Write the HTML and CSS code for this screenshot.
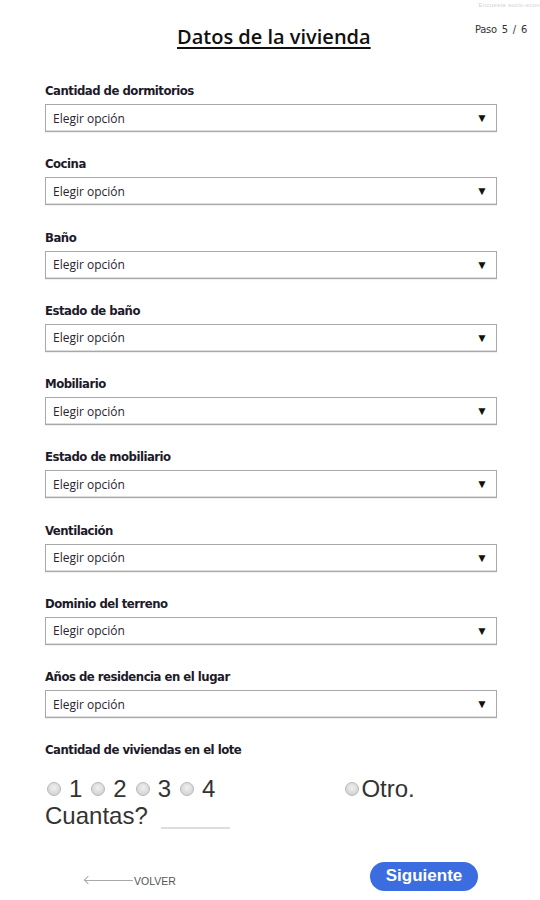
FILE: index.html
```html
<!DOCTYPE html>
<html lang="es">
<head>
<meta charset="utf-8">
<title>Datos de la vivienda</title>
<link rel="stylesheet" href="styles.css">
</head>
<body>
<div class="page">
  <div class="topnote">Encuesta socio-econ</div>
  <header class="header">
    <h1 class="title">Datos de la vivienda</h1>
    <div class="step">Paso 5 / 6</div>
  </header>

  <form class="form">
    <div class="field">
      <div class="label">Cantidad de dormitorios</div>
      <div class="select"><span class="placeholder">Elegir opción</span><span class="arrow">▼</span></div>
    </div>
    <div class="field">
      <div class="label">Cocina</div>
      <div class="select"><span class="placeholder">Elegir opción</span><span class="arrow">▼</span></div>
    </div>
    <div class="field">
      <div class="label">Baño</div>
      <div class="select"><span class="placeholder">Elegir opción</span><span class="arrow">▼</span></div>
    </div>
    <div class="field">
      <div class="label">Estado de baño</div>
      <div class="select"><span class="placeholder">Elegir opción</span><span class="arrow">▼</span></div>
    </div>
    <div class="field">
      <div class="label">Mobiliario</div>
      <div class="select"><span class="placeholder">Elegir opción</span><span class="arrow">▼</span></div>
    </div>
    <div class="field">
      <div class="label">Estado de mobiliario</div>
      <div class="select"><span class="placeholder">Elegir opción</span><span class="arrow">▼</span></div>
    </div>
    <div class="field">
      <div class="label">Ventilación</div>
      <div class="select"><span class="placeholder">Elegir opción</span><span class="arrow">▼</span></div>
    </div>
    <div class="field">
      <div class="label">Dominio del terreno</div>
      <div class="select"><span class="placeholder">Elegir opción</span><span class="arrow">▼</span></div>
    </div>
    <div class="field">
      <div class="label">Años de residencia en el lugar</div>
      <div class="select"><span class="placeholder">Elegir opción</span><span class="arrow">▼</span></div>
    </div>

    <div class="field last">
      <div class="label">Cantidad de viviendas en el lote</div>
      <div class="radios">
        <span class="opt"><span class="dot"></span>1</span>
        <span class="opt"><span class="dot"></span>2</span>
        <span class="opt"><span class="dot"></span>3</span>
        <span class="opt"><span class="dot"></span>4</span>
        <span class="opt other"><span class="dot"></span>Otro.</span>
      </div>
      <div class="howmany">Cuantas? <span class="line"></span></div>
    </div>
  </form>

  <footer class="footer">
    <a class="back"><span class="back-arrow"></span>VOLVER</a>
    <button class="next" type="button">Siguiente</button>
  </footer>
</div>
</body>
</html>
```
FILE: styles.css
```css
html, body {
  margin: 0;
  padding: 0;
  background: #fff;
}
body {
  font-family: "Liberation Sans", Arial, sans-serif;
  color: #222;
  overflow: hidden;
}
.page {
  width: 540px;
  height: 900px;
  position: relative;
}
.topnote {
  text-align: right;
  font-size: 6px;
  line-height: 8px;
  height: 8px;
  padding-top: 1px;
  color: #d2d2d2;
  white-space: nowrap;
  letter-spacing: 0.3px;
}
.header {
  display: flex;
  align-items: flex-start;
  padding-left: 177px;
  padding-right: 13px;
  height: 74px;
}
.title {
  margin: 0;
  margin-top: 15px;
  font-family: "Open Sans", sans-serif;
  font-weight: 600;
  font-size: 20px;
  line-height: 26px;
  color: #111;
  text-decoration: underline;
  text-decoration-thickness: 2px;
  text-underline-offset: 3px;
}
.step {
  margin-left: auto;
  margin-top: 14px;
  font-family: "DejaVu Sans Condensed", sans-serif;
  font-size: 11px;
  word-spacing: 2px;
  color: #333;
  letter-spacing: -0.2px;
}
.form {
  width: 452px;
  margin-left: 45px;
  display: flex;
  flex-direction: column;
  gap: 24.25px;
}
.field {
  display: flex;
  flex-direction: column;
  gap: 5px;
}
.label {
  font-family: "DejaVu Sans Condensed", sans-serif;
  font-weight: bold;
  font-size: 13px;
  line-height: 16px;
  color: #1d1a2a;
  letter-spacing: -0.5px;
}
.select {
  height: 28px;
  box-sizing: border-box;
  border: 1px solid #a9a9a9;
  box-shadow: inset 0 -1px 0 #ddd, 0 1px 1px rgba(0,0,0,0.06);
  display: flex;
  align-items: center;
  padding: 0 8px 0 7px;
  background: #fff;
}
.placeholder {
  font-family: "Open Sans", sans-serif;
  font-size: 12px;
  color: #2a2430;
}
.arrow {
  margin-left: auto;
  font-size: 12px;
  color: #111;
}
.field.last {
  gap: 0;
}
.radios {
  display: flex;
  align-items: center;
  margin-top: 17px;
  font-size: 24px;
  line-height: 27px;
  color: #333;
}
.opt {
  display: flex;
  align-items: center;
  margin-right: 7px;
}
.dot {
  width: 14px;
  height: 14px;
  border-radius: 50%;
  box-sizing: border-box;
  border: 1px solid #b8b8b8;
  background: radial-gradient(circle at 50% 40%, #f0f0f0 0%, #d6d6d6 70%, #c8c8c8 100%);
  margin: 0 8px 0 2px;
}
.opt.other {
  margin-left: 121px;
}
.opt.other .dot {
  margin-right: 2px;
}
.howmany {
  font-size: 24px;
  line-height: 27px;
  color: #333;
  display: flex;
  align-items: flex-end;
}
.line {
  display: inline-block;
  width: 69px;
  height: 0;
  border-bottom: 2px solid #ddd;
  margin-left: 13px;
}
.footer {
  display: flex;
  align-items: center;
  margin-top: 33px;
  padding-left: 85px;
  padding-right: 62px;
}
.back {
  display: flex;
  align-items: center;
  font-size: 10.5px;
  color: #555;
  margin-top: 8px;
}
.back-arrow {
  position: relative;
  width: 48px;
  height: 1px;
  background: #aaa;
  margin-right: 1px;
}
.back-arrow::before {
  content: "";
  position: absolute;
  left: 0;
  top: -3px;
  width: 5px;
  height: 5px;
  border-left: 1px solid #aaa;
  border-bottom: 1px solid #aaa;
  transform: rotate(45deg);
}
.next {
  margin-left: auto;
  width: 108px;
  height: 29px;
  border: none;
  border-radius: 15px;
  background: #3b6de0;
  color: #fff;
  font-family: "Liberation Sans", Arial, sans-serif;
  font-weight: bold;
  font-size: 17px;
  padding: 0 0 2px;
}
```
